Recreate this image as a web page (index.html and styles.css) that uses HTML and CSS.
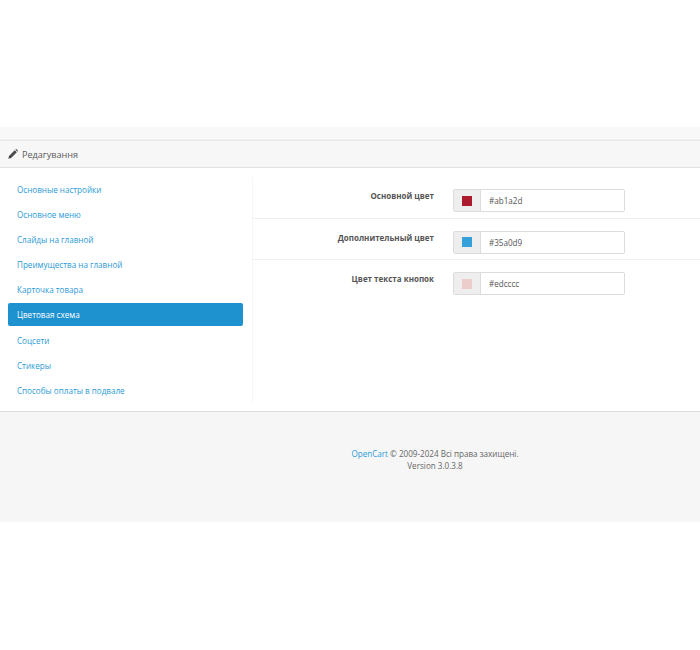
FILE: index.html
```html
<!DOCTYPE html>
<html lang="uk">
<head>
    <meta charset="UTF-8">
    <meta name="viewport" content="width=device-width, initial-scale=1.0">
    <title>Редагування</title>
    <link rel="stylesheet" href="styles.css">
</head>
<body>
    <div class="top-space"></div>
    <div class="content">
        <div class="page-band"></div>
        <div class="panel">
            <div class="panel-heading">
                <svg class="pencil" viewBox="0 0 10 10" width="10" height="10">
                    <path d="M0.3 9.7 L1 6.9 L6.7 1.2 L8.8 3.3 L3.1 9 Z M7.3 0.6 L7.8 0.2 Q8.2 0 8.5 0.2 L9.8 1.5 Q10 1.8 9.8 2.2 L9.4 2.7 Z" fill="#4a4a4a"/>
                </svg>
                Редагування
            </div>
            <div class="panel-body">
                <ul class="side-tabs">
                    <li><a href="#">Основные настройки</a></li>
                    <li><a href="#">Основное меню</a></li>
                    <li><a href="#">Слайды на главной</a></li>
                    <li><a href="#">Преимущества на главной</a></li>
                    <li><a href="#">Карточка товара</a></li>
                    <li class="active"><a href="#">Цветовая схема</a></li>
                    <li><a href="#">Соцсети</a></li>
                    <li><a href="#">Стикеры</a></li>
                    <li><a href="#">Способы оплаты в подвале</a></li>
                </ul>
                <div class="tab-content">
                    <div class="form-row">
                        <label>Основной цвет</label>
                        <div class="color-input">
                            <span class="addon"><i class="swatch swatch-main"></i></span>
                            <span class="value">#ab1a2d</span>
                        </div>
                    </div>
                    <div class="form-row">
                        <label>Дополнительный цвет</label>
                        <div class="color-input">
                            <span class="addon"><i class="swatch swatch-extra"></i></span>
                            <span class="value">#35a0d9</span>
                        </div>
                    </div>
                    <div class="form-row">
                        <label>Цвет текста кнопок</label>
                        <div class="color-input">
                            <span class="addon"><i class="swatch swatch-text"></i></span>
                            <span class="value">#edcccc</span>
                        </div>
                    </div>
                </div>
            </div>
        </div>
    </div>
    <footer class="footer">
        <a href="#">OpenCart</a> © 2009-2024 Всі права захищені.<br>
        Version 3.0.3.8
    </footer>
</body>
</html>
```

FILE: styles.css
```css
* {
    box-sizing: border-box;
}

body {
    margin: 0;
    background: #fff;
    color: #666;
    font-family: "Open Sans", sans-serif;
    font-size: 8.1px;
}

a {
    color: #2b9ad6;
    text-decoration: none;
}

.top-space {
    height: 127px;
}

.content {
    background: #f6f6f6;
}

.page-band {
    height: 13px;
    background: #f8f8f8;
    border-bottom: 1px solid #f2f2f2;
}

.panel {
    background: #fff;
    border-top: 1px solid #e6e6e6;
    border-bottom: 1px solid #dedede;
    box-shadow: 0 1px 2px rgba(0, 0, 0, 0.08);
}

.panel-heading {
    display: flex;
    align-items: center;
    gap: 4px;
    height: 27px;
    padding-left: 8px;
    background: #f7f7f7;
    border-bottom: 1px solid #e2e2e2;
    font-size: 9.1px;
    color: #595959;
}

.panel-body {
    display: flex;
    align-items: flex-start;
    padding: 9px 0 8px 8px;
}

.side-tabs {
    width: 245px;
    margin: 0;
    padding: 0 9px 0 0;
    list-style: none;
    border-right: 1px solid #f6f6f6;
}

.side-tabs li {
    height: 25.15px;
}

.side-tabs a {
    display: flex;
    align-items: center;
    height: 23.5px;
    padding: 1px 0 0 9px;
    border-radius: 2px;
}

.side-tabs .active a {
    padding-top: 0;
    background: #1e91cf;
    color: #fff;
}

.tab-content {
    flex: 1;
}

.form-row {
    display: flex;
    height: 41.5px;
    padding-top: 12px;
    border-bottom: 1px solid #f0f0f0;
}

.form-row:last-child {
    border-bottom: none;
}

.form-row label {
    width: 181px;
    text-align: right;
    font-size: 8px;
    font-weight: 700;
    color: #555;
    line-height: 13px;
}

.color-input {
    display: flex;
    width: 172px;
    height: 23px;
    margin-left: 19px;
    border: 1px solid #dcdcdc;
    border-radius: 2px;
}

.addon {
    display: flex;
    align-items: center;
    justify-content: center;
    width: 27px;
    background: #eee;
    border-right: 1px solid #dcdcdc;
}

.swatch {
    width: 10px;
    height: 10px;
}

.swatch-main { background: #ab1a2d; }
.swatch-extra { background: #35a0d9; }
.swatch-text { background: #edcccc; }

.value {
    padding-left: 8px;
    line-height: 21px;
    color: #555;
}

.footer {
    height: 110px;
    padding-top: 36px;
    padding-left: 170px;
    background: #f6f6f6;
    text-align: center;
    line-height: 12px;
}
```
